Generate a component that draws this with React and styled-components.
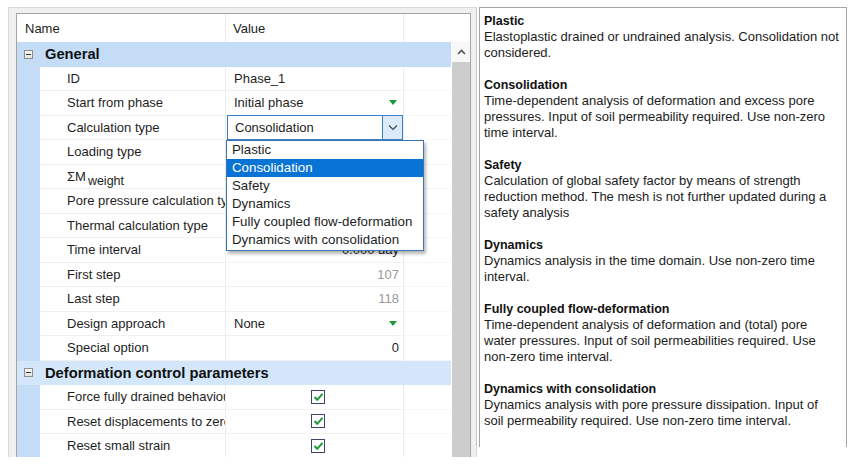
import React from "react";
import styled, { createGlobalStyle } from "styled-components";

const Global = createGlobalStyle`
  html, body { margin: 0; padding: 0; background: #ffffff; }
  body { font-family: "Liberation Sans", Arial, sans-serif; font-size: 13px; color: #1a1a1a; }
  * { box-sizing: border-box; }
`;

const Page = styled.div`
  display: flex;
  align-items: flex-start;
  padding: 7px 0 0 8px;
  width: 858px;
  height: 472px;
  overflow: hidden;
`;

const LeftFrame = styled.div`
  width: 469px;
  height: 450px;
  background: #f0f0f0;
  border: 1px solid #d9d9d9;
  border-bottom: none;
  padding: 5px 5px 0 7px;
  display: flex;
  flex-direction: column;
`;

const Grid = styled.div`
  flex: 1;
  background: #ffffff;
  border: 1px solid #a5a5a5;
  border-bottom: none;
  display: flex;
  flex-direction: column;
  overflow: hidden;
`;

const HeaderRow = styled.div`
  display: grid;
  grid-template-columns: 209px 178px 1fr;
  height: 28px;
  align-items: stretch;
`;

const HeaderCell = styled.div`
  display: flex;
  align-items: center;
  padding-top: 1px;
  padding-left: ${(p) => p.$pad}px;
  border-right: ${(p) => (p.$line ? "1px solid #ececec" : "none")};
  color: #222;
`;

const Body = styled.div`
  flex: 1;
  display: flex;
  min-height: 0;
`;

const Rows = styled.div`
  flex: 1;
  display: flex;
  flex-direction: column;
  position: relative;
`;

const GroupRow = styled.div`
  height: 24.5px;
  flex: none;
  display: flex;
  align-items: center;
  background: ${(p) => p.$bg};
  padding-left: 7px;
  gap: 12px;
  font-weight: bold;
  font-size: 14.7px;
  color: #111;
  white-space: nowrap;
`;

const MinusBox = styled.span`
  width: 9px;
  height: 9px;
  border: 1px solid #8e8e8e;
  background: linear-gradient(#fbfbfb, #e4e4e4);
  position: relative;
  flex: none;
  &::after {
    content: "";
    position: absolute;
    left: 1px;
    right: 1px;
    top: 3px;
    height: 1px;
    background: #333;
  }
`;

const PropRow = styled.div`
  height: 24.5px;
  flex: none;
  display: grid;
  grid-template-columns: 23px 186px 178px 1fr;
`;

const Gutter = styled.div`
  background: #c4dcf6;
`;

const NameCell = styled.div`
  display: flex;
  align-items: center;
  padding-left: 27px;
  white-space: nowrap;
  overflow: hidden;
  border-right: 1px solid #ececec;
  border-bottom: 1px solid #f1f1f1;
  color: #1e1e1e;
`;

const ValueCell = styled.div`
  display: flex;
  align-items: center;
  justify-content: ${(p) => (p.$right ? "flex-end" : "space-between")};
  padding: 0 4px 0 8px;
  white-space: nowrap;
  border-right: 1px solid #ececec;
  border-bottom: 1px solid #f1f1f1;
  color: ${(p) => (p.$muted ? "#9a9a9a" : "#1e1e1e")};
  position: relative;
`;

const EmptyCell = styled.div`
  border-bottom: 1px solid #f7f7f7;
`;

const GreenTri = styled.span`
  width: 0;
  height: 0;
  border-left: 4px solid transparent;
  border-right: 4px solid transparent;
  border-top: 5px solid #1a9a35;
  margin-right: 2px;
`;

const Combo = styled.div`
  position: absolute;
  left: 1px;
  top: -1px;
  right: 0;
  bottom: -1px;
  border: 1px solid #3b7fc4;
  background: #fff;
  display: flex;
  align-items: center;
  padding-left: 7px;
  z-index: 2;
`;

const ComboText = styled.span`
  flex: 1;
`;

const ComboButton = styled.span`
  width: 20px;
  align-self: stretch;
  background: #dbebfb;
  border-left: 1px solid #3b7fc4;
  display: flex;
  align-items: center;
  justify-content: center;
`;

const DropList = styled.div`
  position: absolute;
  left: 0;
  top: 24px;
  width: 198px;
  background: #fff;
  border: 1px solid #3b76b3;
  box-shadow: 2px 3px 3px rgba(0, 0, 0, 0.28);
  padding: 0;
  z-index: 3;
`;

const DropItem = styled.div`
  height: 18.2px;
  line-height: 18px;
  padding-left: 5px;
  white-space: nowrap;
  font-size: 13.3px;
  background: ${(p) => (p.$sel ? "#0a74d6" : "transparent")};
  color: ${(p) => (p.$sel ? "#ffffff" : "#1e1e1e")};
`;

const Check = styled.span`
  width: 14px;
  height: 14px;
  border: 1px solid #3a4766;
  background: #fff;
  display: flex;
  align-items: center;
  justify-content: center;
  margin-left: 77px;
`;

const ScrollBar = styled.div`
  width: 18px;
  flex: none;
  display: flex;
  flex-direction: column;
  margin-left: 1px;
`;

const ScrollUp = styled.div`
  height: 20px;
  display: flex;
  align-items: center;
  justify-content: center;
  background: #f7f7f7;
`;

const ScrollThumb = styled.div`
  flex: 1;
  background: #cdcdcd;
`;

const RightPanel = styled.div`
  width: 368px;
  height: 440px;
  margin-left: 2px;
  border: 1px solid #a5a5a5;
  border-bottom: none;
  background: #fff;
  padding: 5px 0 0 4px;
  font-size: 13px;
  color: #1c1c1c;
  box-shadow: -3px 0 0 -1px #fff, -4px 0 0 -1px #c8c8c8;
`;

const Section = styled.div`
  margin-bottom: 16px;
`;

const SecTitle = styled.div`
  font-weight: bold;
  font-size: 12.5px;
  line-height: 16px;
  color: #111;
`;

const Line = styled.div`
  line-height: 16px;
  white-space: nowrap;
`;

const Sub = styled.span`
  font-size: 12.5px;
  position: relative;
  top: 5px;
  margin-left: 2px;
`;

const Chevron = () => (
  <svg width="10" height="7" viewBox="0 0 10 7">
    <path d="M1 1.5 L5 5.5 L9 1.5" fill="none" stroke="#444" strokeWidth="1.1" />
  </svg>
);

const Tick = () => (
  <svg width="11" height="10" viewBox="0 0 11 10">
    <path d="M1.5 5 L4.2 7.8 L9.5 1.8" fill="none" stroke="#1f9a3a" strokeWidth="2" />
  </svg>
);

const UpArrow = () => (
  <svg width="9" height="6" viewBox="0 0 9 6">
    <path d="M1 5 L4.5 1.5 L8 5" fill="none" stroke="#555" strokeWidth="1.6" />
  </svg>
);

const options = [
  "Plastic",
  "Consolidation",
  "Safety",
  "Dynamics",
  "Fully coupled flow-deformation",
  "Dynamics with consolidation",
];

const general = [
  { name: "ID", value: "Phase_1" },
  { name: "Start from phase", value: "Initial phase", tri: true },
  { name: "Calculation type", combo: true },
  { name: "Loading type", value: "" },
  { name: <>ΣM<Sub>weight</Sub></>, value: "" },
  { name: "Pore pressure calculation type", value: "" },
  { name: "Thermal calculation type", value: "" },
  { name: "Time interval", value: "0.000 day", right: true },
  { name: "First step", value: "107", right: true, muted: true },
  { name: "Last step", value: "118", right: true, muted: true },
  { name: "Design approach", value: "None", tri: true },
  { name: "Special option", value: "0", right: true },
];

const deformation = [
  "Force fully drained behaviour",
  "Reset displacements to zero",
  "Reset small strain",
];

const descriptions = [
  { title: "Plastic", lines: ["Elastoplastic drained or undrained analysis. Consolidation not", "considered."] },
  { title: "Consolidation", lines: ["Time-dependent analysis of deformation and excess pore", "pressures. Input of soil permeability required. Use non-zero", "time interval."] },
  { title: "Safety", lines: ["Calculation of global safety factor by means of strength", "reduction method. The mesh is not further updated during a", "safety analysis"] },
  { title: "Dynamics", lines: ["Dynamics analysis in the time domain. Use non-zero time", "interval."] },
  { title: "Fully coupled flow-deformation", lines: ["Time-dependent analysis of deformation and (total) pore", "water pressures. Input of soil permeabilities required. Use", "non-zero time interval."] },
  { title: "Dynamics with consolidation", lines: ["Dynamics analysis with pore pressure dissipation. Input of", "soil permeability required. Use non-zero time interval."] },
];

export default function App() {
  return (
    <>
      <Global />
      <Page>
        <LeftFrame>
          <Grid>
            <HeaderRow>
              <HeaderCell $pad={8} $line>Name</HeaderCell>
              <HeaderCell $pad={7} $line>Value</HeaderCell>
              <HeaderCell />
            </HeaderRow>
            <Body>
              <Rows>
                <GroupRow $bg="#c4dcf6">
                  <MinusBox />
                  General
                </GroupRow>
                {general.map((r, i) => (
                  <PropRow key={i}>
                    <Gutter />
                    <NameCell>{r.name}</NameCell>
                    <ValueCell $right={r.right} $muted={r.muted}>
                      {r.combo ? (
                        <>
                          <Combo>
                            <ComboText>Consolidation</ComboText>
                            <ComboButton>
                              <Chevron />
                            </ComboButton>
                          </Combo>
                          <DropList>
                            {options.map((o, k) => (
                              <DropItem key={o} $sel={k === 1}>
                                {o}
                              </DropItem>
                            ))}
                          </DropList>
                        </>
                      ) : (
                        <>
                          <span>{r.value}</span>
                          {r.tri && <GreenTri />}
                        </>
                      )}
                    </ValueCell>
                    <EmptyCell />
                  </PropRow>
                ))}
                <GroupRow $bg="#d3e6fa">
                  <MinusBox />
                  Deformation control parameters
                </GroupRow>
                {deformation.map((n) => (
                  <PropRow key={n}>
                    <Gutter />
                    <NameCell>{n}</NameCell>
                    <ValueCell>
                      <Check>
                        <Tick />
                      </Check>
                    </ValueCell>
                    <EmptyCell />
                  </PropRow>
                ))}
              </Rows>
              <ScrollBar>
                <ScrollUp>
                  <UpArrow />
                </ScrollUp>
                <ScrollThumb />
              </ScrollBar>
            </Body>
          </Grid>
        </LeftFrame>
        <RightPanel>
          {descriptions.map((d) => (
            <Section key={d.title}>
              <SecTitle>{d.title}</SecTitle>
              {d.lines.map((l) => (
                <Line key={l}>{l}</Line>
              ))}
            </Section>
          ))}
        </RightPanel>
      </Page>
    </>
  );
}
